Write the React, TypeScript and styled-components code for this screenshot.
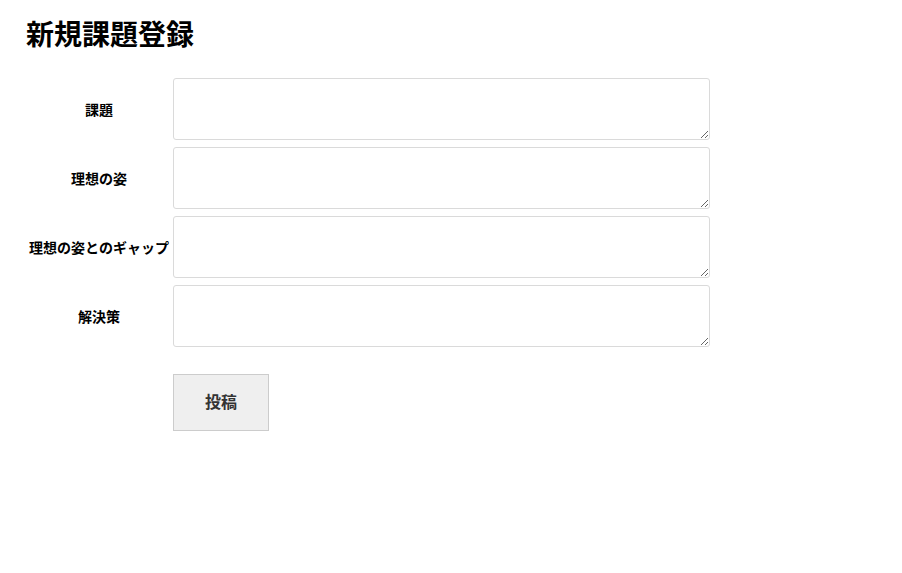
import React from "react";
import styled, { createGlobalStyle } from "styled-components";

const GlobalStyle = createGlobalStyle`
  body {
    margin: 0;
    background: #fff;
    font-family: "Noto Sans CJK JP", "Noto Sans", sans-serif;
    color: #000;
  }
`;

const fields = ["課題", "理想の姿", "理想の姿とのギャップ", "解決策"];

export default function App() {
  return (
    <>
      <GlobalStyle />
      <Page>
        <Title>新規課題登録</Title>
        <Form onSubmit={(e) => e.preventDefault()}>
          {fields.map((label) => (
            <Row key={label}>
              <Label>{label}</Label>
              <TextArea />
            </Row>
          ))}
          <Actions>
            <Spacer />
            <SubmitButton type="submit">投稿</SubmitButton>
          </Actions>
        </Form>
      </Page>
    </>
  );
}

const Page = styled.div`
  padding: 16px 0 0 26px;
`;

const Title = styled.h1`
  margin: 0 0 28px;
  font-size: 28px;
  line-height: 34px;
  font-weight: bold;
`;

const Form = styled.form`
  display: flex;
  flex-direction: column;
  gap: 7px;
`;

const Row = styled.div`
  display: flex;
  align-items: center;
`;

const Label = styled.label`
  width: 146px;
  flex-shrink: 0;
  padding-right: 1px;
  text-align: center;
  font-size: 14px;
  font-weight: bold;
  white-space: nowrap;
`;

const TextArea = styled.textarea`
  box-sizing: border-box;
  width: 537px;
  height: 62px;
  margin: 0;
  border: 1px solid #dadada;
  border-radius: 3px;
  font-family: inherit;
  font-size: 14px;
`;

const Actions = styled.div`
  display: flex;
  margin-top: 20px;
`;

const Spacer = styled.div`
  width: 147px;
`;

const SubmitButton = styled.button`
  width: 96px;
  height: 57px;
  padding: 0 0 3px;
  background: #efefef;
  border: 1px solid #cccccc;
  font-family: inherit;
  font-size: 16px;
  font-weight: bold;
  color: #333;
  cursor: pointer;
`;
